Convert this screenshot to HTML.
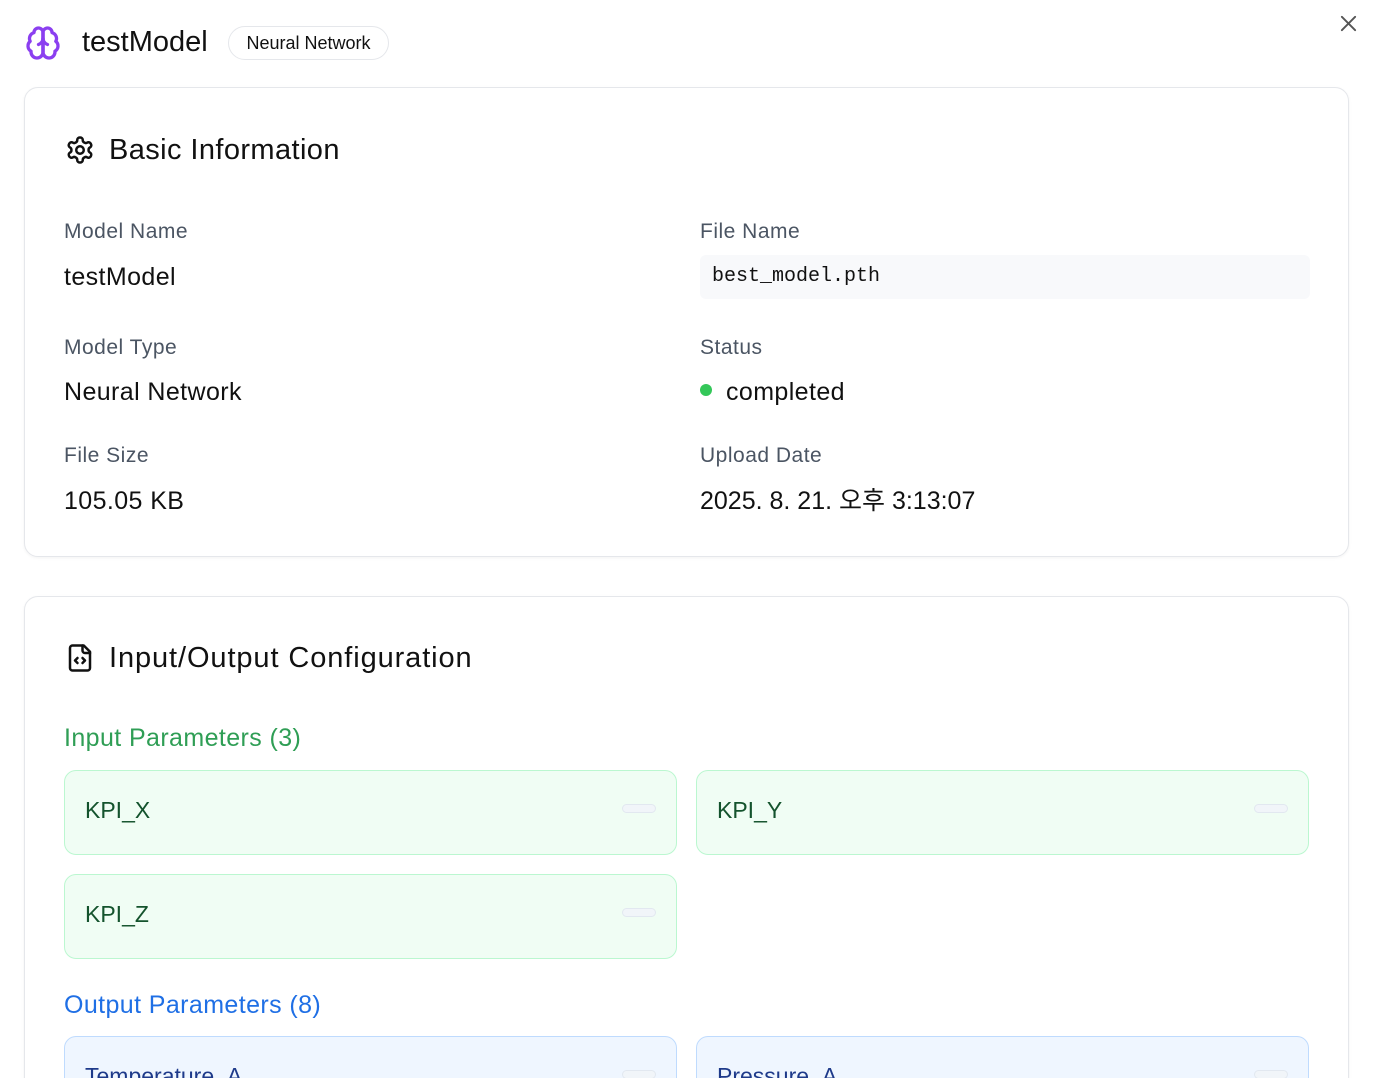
<!DOCTYPE html>
<html style="width:1388px;height:1078px;overflow:hidden"><head><meta charset="utf-8"><style>
*{box-sizing:border-box;margin:0;padding:0}
body{width:1388px;height:1078px;overflow:hidden;background:#fff;font-family:"Liberation Sans","Noto Sans CJK KR",sans-serif;color:#111;position:relative}
.a{position:absolute;white-space:nowrap;line-height:1.2}
.card{position:absolute;left:24px;width:1325px;border:1px solid #e5e7eb;border-radius:14px;background:#fff;box-shadow:0 1px 3px rgba(0,0,0,.05)}
.h{font-size:29px;color:#111;letter-spacing:.4px}
.lbl{font-size:21px;color:#4b5563;letter-spacing:.5px}
.val{font-size:25px;color:#111;letter-spacing:.4px;height:30px;line-height:30px}
.p{position:absolute;width:613px;height:85px;border-radius:12px}
.pi{background:#f0fdf4;border:1px solid #bbf7d0}
.po{background:#eff6ff;border:1px solid #bfdbfe}
.p span{position:absolute;left:20px;top:26px;font-size:23px}
.pi span{color:#14532d}
.po span{color:#1e3a8a}
.p i{position:absolute;right:20px;top:33px;width:34px;height:9px;border:1px solid #e2e8f0;border-radius:5px;background:#f1f5f9}
</style></head><body>
<svg class="a" style="left:25px;top:25px" width="36" height="36" viewBox="0 0 24 24" fill="none" stroke="#8b3ff0" stroke-width="2.2" stroke-linecap="round" stroke-linejoin="round"><path d="M12 5a3 3 0 1 0-5.997.125 4 4 0 0 0-2.526 5.77 4 4 0 0 0 .556 6.588A4 4 0 1 0 12 18Z"/><path d="M12 5a3 3 0 1 1 5.997.125 4 4 0 0 1 2.526 5.77 4 4 0 0 1-.556 6.588A4 4 0 1 1 12 18Z"/><path d="M12 5v13"/><path d="M9 13a4.5 4.5 0 0 0 3-4"/><path d="M15 13a4.5 4.5 0 0 1-3-4"/></svg>
<div class="a" style="left:82px;top:25px;font-size:29px">testModel</div>
<div class="a" style="left:228px;top:26px;width:161px;height:34px;border:1px solid #e5e7eb;border-radius:17px;font-size:18px;line-height:32px;text-align:center">Neural Network</div>
<svg class="a" style="left:1339px;top:14px" width="19" height="19" viewBox="0 0 20 20" stroke="#555" stroke-width="2" stroke-linecap="round"><path d="M3 3L17 17M17 3L3 17"/></svg>

<div class="card" style="top:87px;height:470px"></div>
<svg class="a" style="left:65px;top:135px" width="30" height="30" viewBox="0 0 24 24" fill="none" stroke="#111" stroke-width="2" stroke-linecap="round" stroke-linejoin="round"><path d="M12.22 2h-.44a2 2 0 0 0-2 2v.18a2 2 0 0 1-1 1.73l-.43.25a2 2 0 0 1-2 0l-.15-.08a2 2 0 0 0-2.730.73l-.22.38a2 2 0 0 0 .73 2.73l.15.1a2 2 0 0 1 1 1.72v.51a2 2 0 0 1-1 1.740l-.15.09a2 2 0 0 0-.73 2.73l.22.38a2 2 0 0 0 2.73.73l.15-.08a2 2 0 0 1 2 0l.43.25a2 2 0 0 1 1 1.73V20a2 2 0 0 0 2 2h.44a2 2 0 0 0 2-2v-.18a2 2 0 0 1 1-1.73l.43-.25a2 2 0 0 1 2 0l.15.08a2 2 0 0 0 2.73-.73l.22-.39a2 2 0 0 0-.73-2.73l-.15-.08a2 2 0 0 1-1-1.74v-.5a2 2 0 0 1 1-1.74l.15-.09a2 2 0 0 0 .73-2.73l-.22-.38a2 2 0 0 0-2.73-.73l-.15.08a2 2 0 0 1-2 0l-.43-.25a2 2 0 0 1-1-1.73V4a2 2 0 0 0-2-2z"/><circle cx="12" cy="12" r="3"/></svg>
<div class="a h" style="left:109px;top:133px">Basic Information</div>

<div class="a lbl" style="left:64px;top:219px">Model Name</div>
<div class="a val" style="left:64px;top:262px">testModel</div>
<div class="a lbl" style="left:700px;top:219px">File Name</div>
<div class="a" style="left:700px;top:255px;width:610px;height:44px;background:#f8f9fb;border-radius:6px"></div>
<div class="a" style="left:712px;top:265px;font-family:'Liberation Mono',monospace;font-size:20px">best_model.pth</div>

<div class="a lbl" style="left:64px;top:335px">Model Type</div>
<div class="a val" style="left:64px;top:377px">Neural Network</div>
<div class="a lbl" style="left:700px;top:335px">Status</div>
<div class="a" style="left:700px;top:384px;width:12px;height:12px;border-radius:50%;background:#34c759"></div>
<div class="a val" style="left:726px;top:377px">completed</div>

<div class="a lbl" style="left:64px;top:443px">File Size</div>
<div class="a val" style="left:64px;top:486px">105.05 KB</div>
<div class="a lbl" style="left:700px;top:443px">Upload Date</div>
<div class="a val" style="left:700px;top:486px;letter-spacing:0">2025. 8. 21. 오후 3:13:07</div>

<div class="card" style="top:596px;height:520px"></div>
<svg class="a" style="left:65px;top:642px" width="30" height="32" viewBox="0 0 24 24" fill="none" stroke="#111" stroke-width="2" stroke-linecap="round" stroke-linejoin="round"><path d="M15 2H6a2 2 0 0 0-2 2v16a2 2 0 0 0 2 2h12a2 2 0 0 0 2-2V7Z"/><path d="M14 2v4a2 2 0 0 0 2 2h4"/><path d="M10 12l-2 2 2 2"/><path d="M14 16l2-2-2-2"/></svg>
<div class="a h" style="left:109px;top:641px;letter-spacing:.9px">Input/Output Configuration</div>

<div class="a" style="left:64px;top:723px;font-size:25px;letter-spacing:.4px;color:#2f9e55">Input Parameters (3)</div>
<div class="p pi" style="left:64px;top:770px"><span>KPI_X</span><i></i></div>
<div class="p pi" style="left:696px;top:770px"><span>KPI_Y</span><i></i></div>
<div class="p pi" style="left:64px;top:874px"><span>KPI_Z</span><i></i></div>

<div class="a" style="left:64px;top:990px;font-size:25px;letter-spacing:.4px;color:#1f6fe5">Output Parameters (8)</div>
<div class="p po" style="left:64px;top:1036px"><span>Temperature_A</span><i></i></div>
<div class="p po" style="left:696px;top:1036px"><span>Pressure_A</span><i></i></div>
</body></html>
